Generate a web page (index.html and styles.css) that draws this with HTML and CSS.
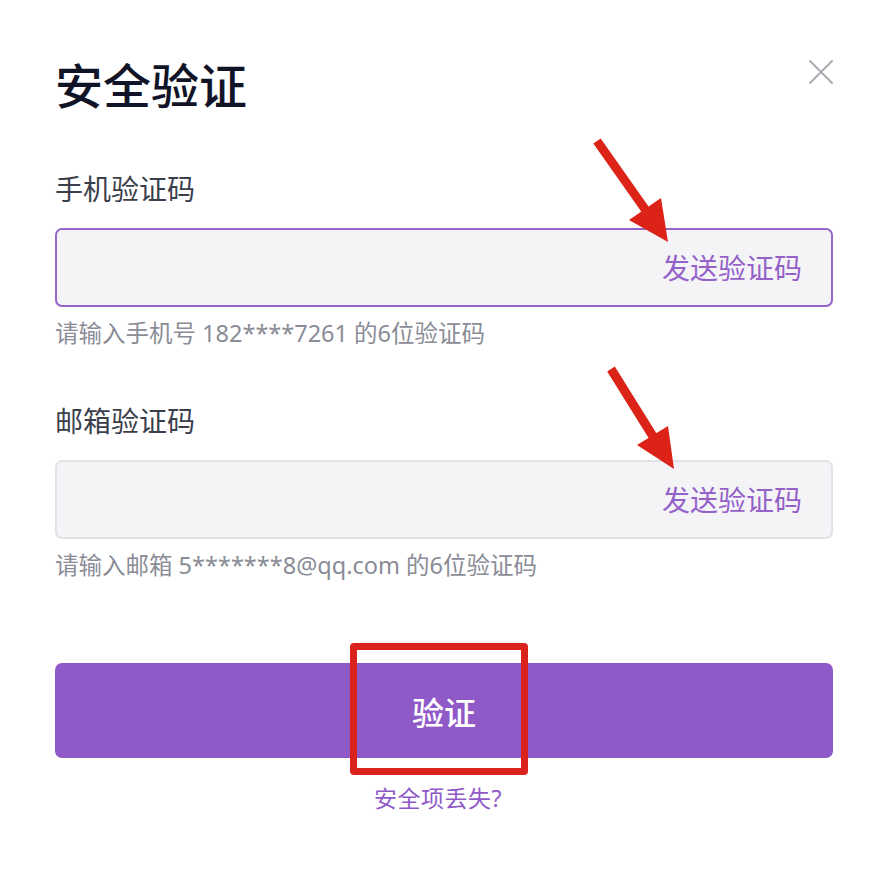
FILE: index.html
```html
<!DOCTYPE html>
<html lang="zh-CN">
<head>
<meta charset="utf-8">
<title>安全验证</title>
<link rel="stylesheet" href="styles.css">
</head>
<body>
<div class="dialog">
  <div class="header">
    <h1 class="title">安全验证</h1>
    <button class="close" aria-label="关闭">
      <svg width="24" height="24" viewBox="0 0 24 24"><path d="M1 1 L23 23 M23 1 L1 23" stroke="#a9acb3" stroke-width="2" fill="none" stroke-linecap="round"/></svg>
    </button>
  </div>

  <div class="field field-first">
    <div class="label">手机验证码</div>
    <div class="input input-active"><span class="send">发送验证码</span></div>
    <div class="hint">请输入手机号 182****7261 的6位验证码</div>
  </div>

  <div class="field field-second">
    <div class="label">邮箱验证码</div>
    <div class="input"><span class="send">发送验证码</span></div>
    <div class="hint">请输入邮箱 5*******8@qq.com 的6位验证码</div>
  </div>

  <button class="submit">验证</button>
  <div class="lost">安全项丢失?</div>
</div>

<div class="highlight-box"></div>
<svg class="annotations" width="892" height="872" viewBox="0 0 892 872">
  <line x1="597" y1="141" x2="647" y2="212" stroke="#dc2318" stroke-width="9"/>
  <polygon points="668,242 661,198 629,220" fill="#dc2318"/>
  <line x1="611" y1="369" x2="654" y2="438" stroke="#dc2318" stroke-width="9"/>
  <polygon points="674,469 668,426 637,445" fill="#dc2318"/>
</svg>
</body>
</html>
```

FILE: styles.css
```css
* { box-sizing: border-box; }
html, body { margin: 0; padding: 0; background: #ffffff; }
body {
  width: 892px;
  height: 872px;
  position: relative;
  font-family: "Noto Sans", "Noto Sans CJK SC", sans-serif;
  overflow: hidden;
}
.dialog {
  padding: 56px 59px 0 55px;
  display: flex;
  flex-direction: column;
}
.header {
  display: flex;
  justify-content: space-between;
  align-items: flex-start;
}
.title {
  margin: 0;
  font-size: 48px;
  line-height: 60px;
  font-weight: 500;
  color: #111427;
}
.close {
  margin-top: 4px;
  padding: 0;
  border: 0;
  background: none;
  width: 24px;
  height: 24px;
  display: block;
}
.close svg { display: block; }
.field { display: flex; flex-direction: column; }
.field-first { margin-top: 55px; }
.field-second { margin-top: 55px; }
.label {
  font-size: 28px;
  line-height: 36px;
  color: #3b3e4b;
}
.input {
  margin-top: 21px;
  height: 79px;
  background: #f4f4f7;
  border: 2px solid #e2e2e6;
  border-radius: 7px;
  display: flex;
  align-items: center;
  justify-content: flex-end;
  padding-right: 29px;
}
.input-active { border-color: #9565c8; }
.send {
  font-size: 28px;
  line-height: 36px;
  color: #9461c9;
}
.hint {
  margin-top: 11px;
  font-size: 23.5px;
  line-height: 30px;
  color: #8a8c96;
}
.submit {
  margin-top: 83px;
  height: 95px;
  border: 0;
  border-radius: 7px;
  background: #8f5ac8;
  color: #ffffff;
  font-family: "Noto Sans", "Noto Sans CJK SC", sans-serif;
  font-size: 32px;
  font-weight: 500;
  padding: 0;
}
.lost {
  margin-top: 25px;
  text-align: center;
  font-size: 23px;
  line-height: 30px;
  color: #8f5ac8;
  letter-spacing: 0.5px;
  padding-right: 12px;
}
.highlight-box {
  position: absolute;
  left: 350px;
  top: 643px;
  width: 178px;
  height: 132px;
  border: 7px solid #d9231c;
  border-radius: 4px;
}
.annotations {
  position: absolute;
  left: 0;
  top: 0;
  pointer-events: none;
}
```
